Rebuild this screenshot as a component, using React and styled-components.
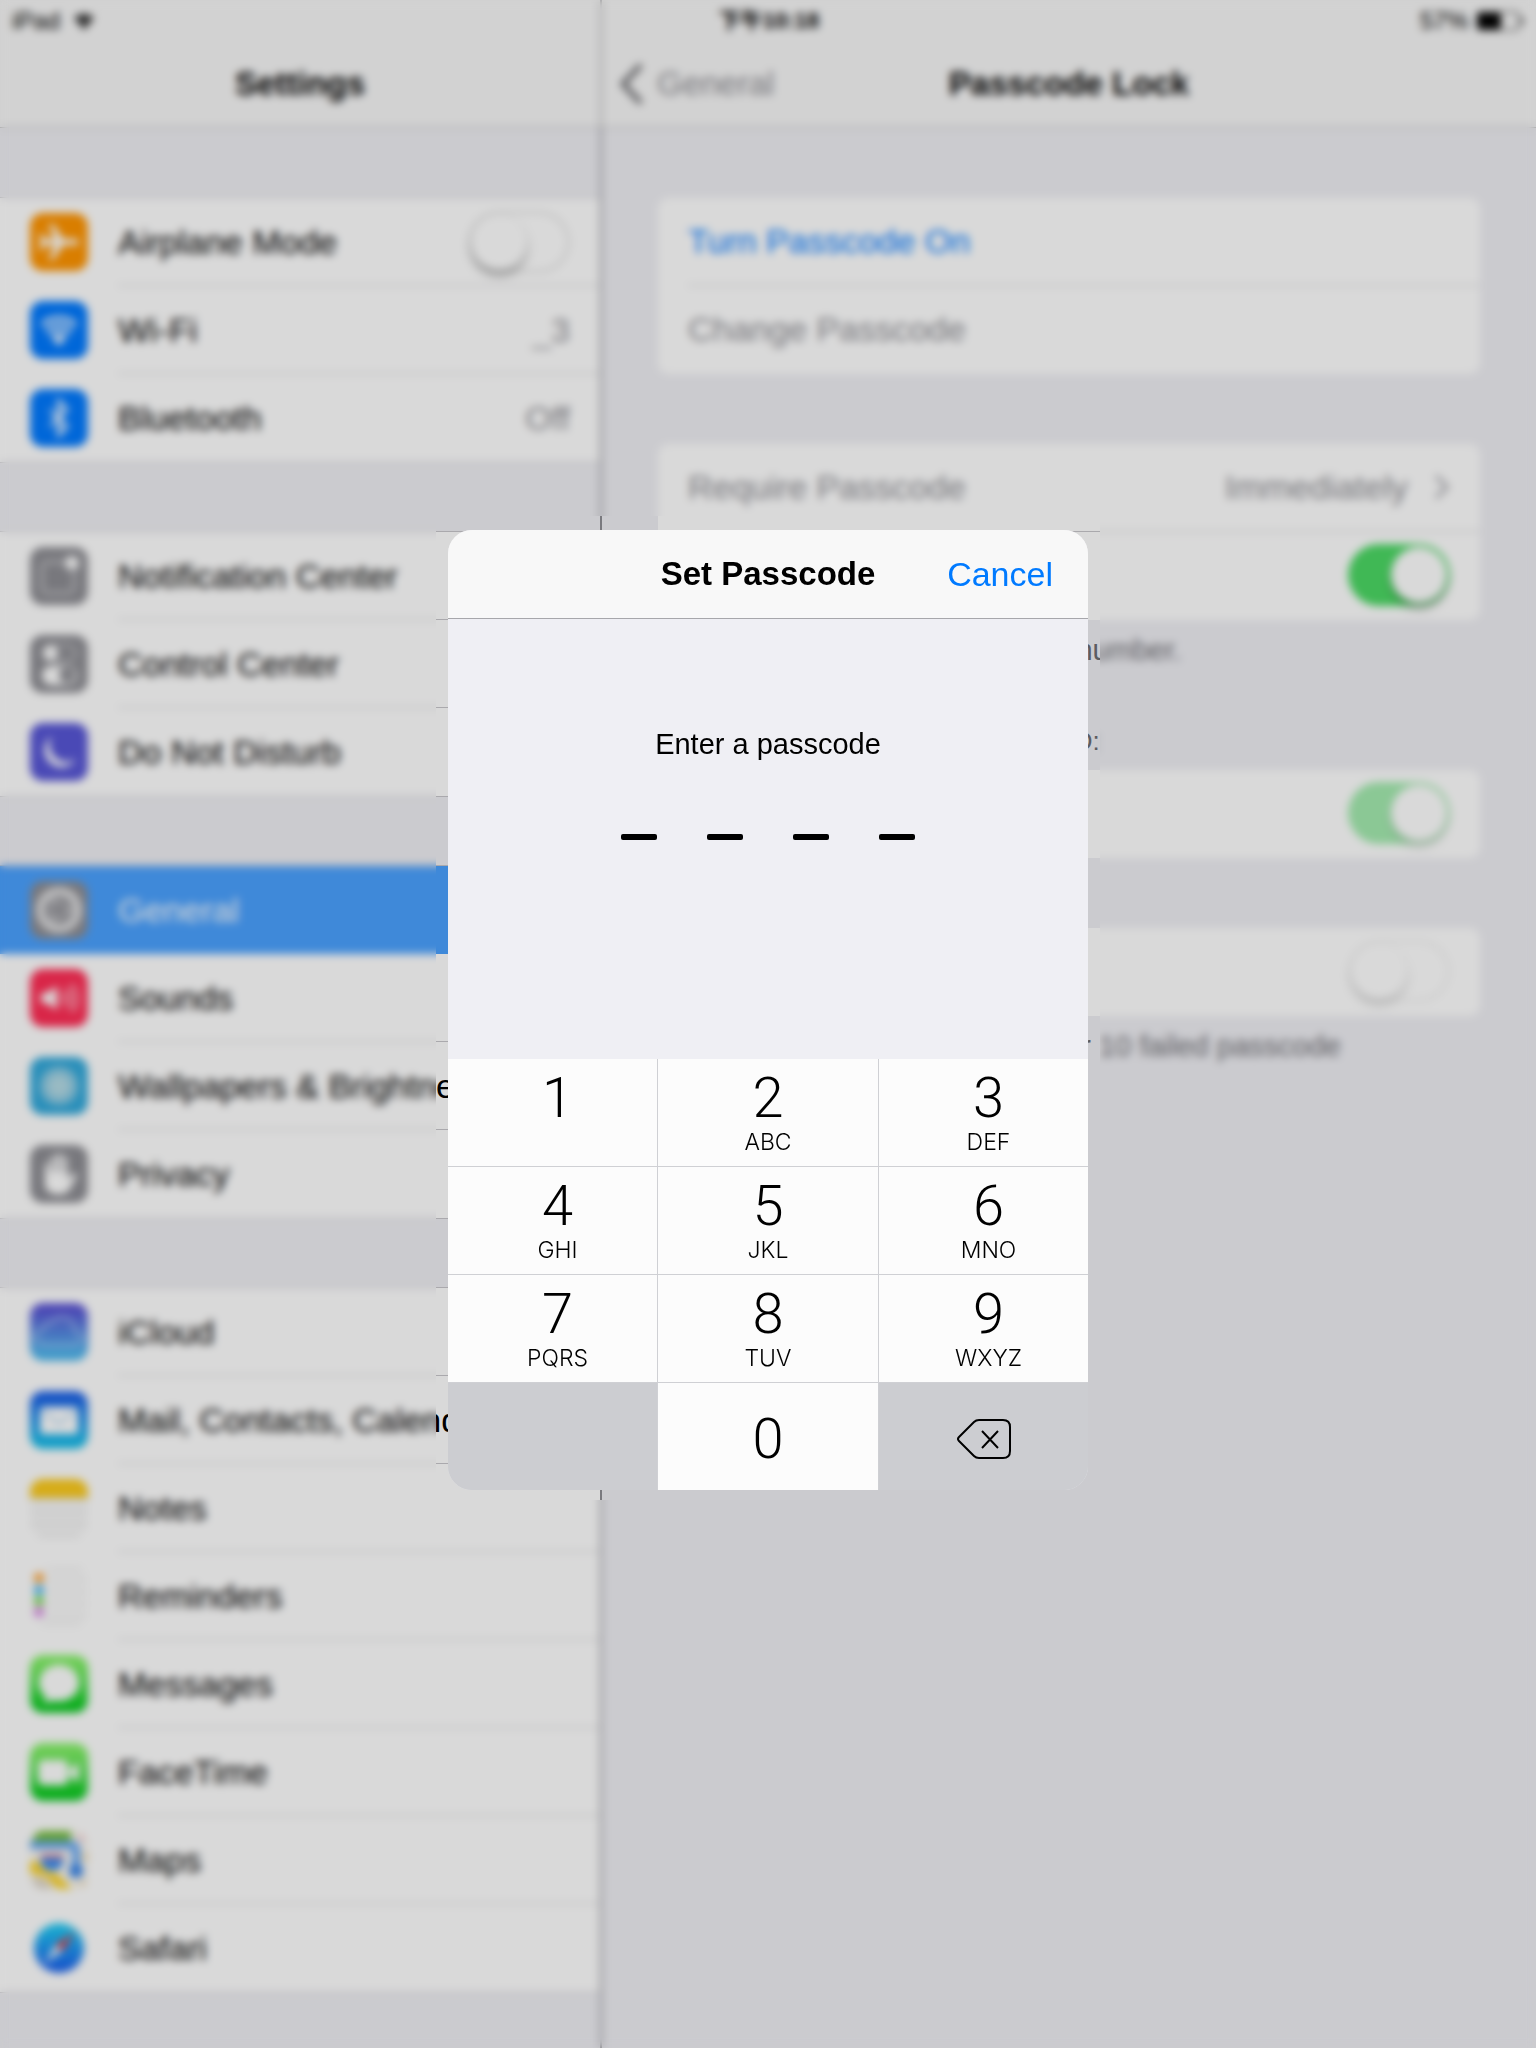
import React from "react";
import styled, { createGlobalStyle, css } from "styled-components";

const GlobalStyle = createGlobalStyle`
  *, *::before, *::after { box-sizing: border-box; }
  body {
    margin: 0;
    background: #efeff4;
    color: #000;
    font-family: "Liberation Sans", Arial, "Noto Sans CJK TC", sans-serif;
    font-size: 34px;
    line-height: 40px;
  }
  button, input { font: inherit; }
`;

/* ---------- page shell ---------- */

const Shell = styled.div`
  display: grid;
  grid-template-columns: 600px 2px minmax(0, 1fr);
  grid-template-rows: 40px 88px auto;
  min-height: 100vh;
`;

const StatusBar = styled.div`
  grid-area: 1 / 1 / 2 / -1;
  display: grid;
  grid-template-columns: 1fr auto 1fr;
  align-items: center;
  padding: 2px 10px 0 12px;
  background: #f7f7f7;
  font-size: 24px;
  line-height: 38px;
`;

const StatusGroup = styled.div`
  display: flex;
  align-items: center;
  justify-content: ${(p) => (p.$end ? "flex-end" : "flex-start")};
  gap: ${(p) => (p.$end ? 8 : 14)}px;
`;

const Clock = styled.time`
  font-size: 22px;
  font-weight: 700;
`;

const Divider = styled.div`
  grid-area: 1 / 2 / -1 / 3;
  z-index: 1;
  background: linear-gradient(#b2b2b6 128px, #8f8f94 128px);
`;

const NavBar = styled.header`
  grid-row: 2;
  grid-column: ${(p) => p.$column};
  display: grid;
  grid-template-columns: 1fr auto 1fr;
  align-items: center;
  padding: 0 18px;
  background: #f7f7f7;
  border-bottom: 1px solid #b2b2b6;
`;

const NavTitle = styled.h1`
  grid-column: 2;
  margin: 0;
  font-size: 33px;
  line-height: 40px;
  font-weight: 700;
`;

const BackLink = styled.a`
  display: flex;
  align-items: center;
  gap: 14px;
  color: #8e8e93;
  font-size: 33px;
  text-decoration: none;
`;

/* ---------- sidebar ---------- */

const Sidebar = styled.nav`
  grid-area: 3 / 1 / 4 / 2;
  display: flex;
  flex-direction: column;
  gap: 70px;
  padding: 70px 0 56px;
  min-width: 0;
`;

const List = styled.ul`
  margin: 0;
  padding: 0;
  list-style: none;
  background: #fff;
  box-shadow: 0 -1px #c8c7cc, 0 1px #c8c7cc;
`;

const rowBase = css`
  display: flex;
  align-items: center;
  height: 88px;
  color: inherit;
  text-decoration: none;
  white-space: nowrap;
`;

const SideItem = styled.li`
  ${rowBase}
  gap: 30px;
  padding-left: 30px;
  background: ${(p) => (p.$selected ? "#4ba2ff" : "transparent")};
  color: ${(p) => (p.$selected ? "#fff" : "#000")};
`;

const SideBody = styled.a`
  ${rowBase}
  flex: 1;
  min-width: 0;
  justify-content: space-between;
  padding-right: 30px;
  border-bottom: ${(p) => (p.$line ? "1px solid #c8c7cc" : "0")};
`;

const Value = styled.span`
  color: #8e8e93;
`;

/* ---------- detail pane ---------- */

const Detail = styled.main`
  grid-area: 3 / 3 / 4 / 4;
  display: flex;
  flex-direction: column;
  padding: 70px 56px 0;
`;

const Section = styled.section`
  margin-bottom: ${(p) => (p.$tight ? 55 : 70)}px;
`;

const Card = styled.div`
  border-radius: 10px;
  background: #fff;
`;

const CardRow = styled.div`
  ${rowBase}
  justify-content: space-between;
  margin-left: 30px;
  padding: 0 30px 3px 0;
  color: ${(p) => p.$color || "#000"};
  & + & { box-shadow: 0 -1px #c8c7cc; }
`;

const Accessory = styled.span`
  display: flex;
  align-items: center;
  gap: 26px;
`;

const Note = styled.p`
  margin: 0;
  padding: 12px 0 0 30px;
  color: #6d6d72;
  font-size: 29px;
  line-height: 36px;
`;

const GroupLabel = styled.h2`
  margin: 0;
  padding: 0 0 11px 30px;
  color: #6d6d72;
  font-size: 26px;
  line-height: 36px;
  font-weight: 400;
`;

const Switch = styled.input.attrs({ type: "checkbox", role: "switch" })`
  appearance: none;
  display: flex;
  flex: none;
  justify-content: flex-start;
  width: 102px;
  height: 62px;
  margin: 0;
  padding: 3px;
  border-radius: 31px;
  background: #fff;
  box-shadow: inset 0 0 0 3px #e5e5e5;

  &::before {
    content: "";
    width: 56px;
    height: 56px;
    border-radius: 50%;
    background: #fff;
    box-shadow: 0 0 0 1px rgba(0, 0, 0, 0.06), 0 6px 6px rgba(0, 0, 0, 0.28);
  }
  &:checked {
    justify-content: flex-end;
    background: #4cd964;
    box-shadow: none;
  }
  &:disabled { opacity: 0.5; }
`;

/* ---------- passcode dialog ---------- */

const Overlay = styled.div`
  position: fixed;
  inset: 0;
  z-index: 2;
  display: flex;
  align-items: center;
  justify-content: center;
  padding-bottom: 28px;
  background: rgba(0, 0, 0, 0.15);
`;

/* Blurs everything except a margin kept clear around the dialog. */
const Frost = styled.div`
  position: absolute;
  inset: 0;
  backdrop-filter: blur(4px);
  clip-path: polygon(
    evenodd,
    0 0, 100% 0, 100% 100%, 0 100%, 0 0,
    calc(50% - 332px) calc(50% - 508px),
    calc(50% + 332px) calc(50% - 508px),
    calc(50% + 332px) calc(50% + 476px),
    calc(50% - 332px) calc(50% + 476px),
    calc(50% - 332px) calc(50% - 508px)
  );
`;

const Dialog = styled.div`
  position: relative;
  display: flex;
  flex-direction: column;
  width: 640px;
  overflow: hidden;
  border-radius: 24px;
  background: #efeff4;
`;

const DialogBar = styled.div`
  display: grid;
  grid-template-columns: 1fr auto 1fr;
  align-items: center;
  height: 89px;
  padding: 0 35px;
  border-bottom: 1px solid #a7a7ab;
  background: #f8f8f8;
`;

const CancelButton = styled.button`
  justify-self: end;
  padding: 0;
  border: 0;
  background: none;
  color: #007aff;
`;

const Entry = styled.div`
  display: flex;
  flex-direction: column;
  align-items: center;
  gap: 72px;
  height: 440px;
  padding-top: 107px;
`;

const Prompt = styled.p`
  margin: 0;
  font-size: 29px;
  line-height: 36px;
`;

const Digits = styled.div`
  display: flex;
  gap: 50px;
`;

const Dash = styled.span`
  width: 36px;
  height: 6px;
  border-radius: 2px;
  background: #000;
`;

const Keypad = styled.div`
  display: grid;
  grid-template-columns: 209px 1fr 209px;
  grid-auto-rows: 107px;
  gap: 1px;
  background: #cfd0d4;
`;

const Key = styled.button`
  display: flex;
  flex-direction: column;
  align-items: center;
  justify-content: ${(p) => (p.$centered ? "center" : "flex-start")};
  padding: ${(p) => (p.$centered ? 4 : 11)}px 0 0 ${(p) => (p.$outer ? 10 : 0)}px;
  border: 0;
  background: ${(p) => (p.$plain ? "#cccdd1" : "#fcfcfc")};
  color: #000;
  font-weight: 300;
`;

const KeyDigit = styled.span`
  font-family: Roboto, "Liberation Sans", sans-serif;
  font-size: 56px;
  line-height: 56px;
`;

const KeyLetters = styled.span`
  font-family: Inter, "Liberation Sans", sans-serif;
  font-size: 23px;
  line-height: 32px;
`;

const KeyBlank = styled.span`
  background: #cccdd1;
`;

/* ---------- drawings ---------- */

const Tile = ({ fill, children }) => (
  <svg width="58" height="58" viewBox="0 0 58 58" aria-hidden="true">
    <rect width="58" height="58" rx="13" fill={fill} />
    {children}
  </svg>
);

const Grad = ({ id, from, to }) => (
  <defs>
    <linearGradient id={id} x1="0" y1="0" x2="0" y2="1">
      <stop offset="0.1" stopColor={from} />
      <stop offset="0.9" stopColor={to} />
    </linearGradient>
  </defs>
);

const icons = {
  airplane: (
    <Tile fill="#ff9500">
      <path d="M49 29c0 2-2 3-5 3H33L23 47h-4l5-15h-8l-4 5H9l2-8-2-8h3l4 5h8l-5-15h4l10 15h11c3 0 5 1 5 3z" fill="#fff" />
    </Tile>
  ),
  wifi: (
    <Tile fill="#007aff">
      <g fill="none" stroke="#fff" strokeWidth="4">
        <path d="M12 24a25 25 0 0 1 34 0" />
        <path d="M17 31a17 17 0 0 1 24 0" />
        <path d="M22 37a10 10 0 0 1 14 0" />
      </g>
      <path d="M29 45l-5-6a8 8 0 0 1 10 0z" fill="#fff" />
    </Tile>
  ),
  bluetooth: (
    <Tile fill="#007aff">
      <path d="M20 21l17 16-8 9V12l8 9-17 16" fill="none" stroke="#fff" strokeWidth="3" />
    </Tile>
  ),
  notifications: (
    <Tile fill="#8e8e93">
      <path d="M35 15H17a5 5 0 0 0-5 5v21a5 5 0 0 0 5 5h22a5 5 0 0 0 5-5V24" fill="none" stroke="#e0e0e2" strokeWidth="2" />
      <circle cx="42" cy="16" r="7" fill="#fff" />
    </Tile>
  ),
  control: (
    <Tile fill="#8e8e93">
      <rect x="13" y="10" width="33" height="16" rx="8" fill="none" stroke="#d0d0d3" strokeWidth="2" />
      <circle cx="21" cy="18" r="7" fill="#fff" />
      <rect x="12" y="31" width="35" height="19" rx="9" fill="#fff" />
      <circle cx="37" cy="40" r="8" fill="#8e8e93" />
    </Tile>
  ),
  moon: (
    <Tile fill="#5856d6">
      <path d="M22 13a17 17 0 0 0 24 23A17 17 0 1 1 22 13z" fill="#fff" />
    </Tile>
  ),
  gear: (
    <Tile fill="#8e8e93">
      <circle cx="29" cy="29" r="18" fill="none" stroke="#e4e4e6" strokeWidth="7" />
      <circle cx="29" cy="29" r="23" fill="none" stroke="#e4e4e6" strokeWidth="2" strokeDasharray="3 3" />
      <circle cx="29" cy="29" r="8" fill="none" stroke="#c4c4c8" strokeWidth="3" />
      <path d="M37 29h9M25 22l-5-8M25 36l-5 8" stroke="#d8d8da" strokeWidth="3" />
    </Tile>
  ),
  sounds: (
    <Tile fill="#ff2d55">
      <path d="M11 24h6l10-7v24l-10-7h-6z" fill="#fff" />
      <path d="M32 23q4 6 0 12M37 19q7 10 0 20M42 15q10 14 0 28" fill="none" stroke="#fff" strokeWidth="2" />
    </Tile>
  ),
  wallpaper: (
    <Tile fill="#32a9db">
      <circle cx="29" cy="29" r="19" fill="#8ccbe3" />
      <circle cx="29" cy="29" r="11" fill="#b4dbe6" />
    </Tile>
  ),
  privacy: (
    <Tile fill="#8e8e93">
      <path d="M17 36V20M23 28V13M29 28V10M35 28V13" stroke="#fff" strokeWidth="4" strokeLinecap="round" />
      <path d="M15 27h23v8l5-6c2-2 5 0 4 2l-8 14c-3 6-21 7-24-4z" fill="#fff" />
    </Tile>
  ),
  icloud: (
    <Tile fill="url(#g-icloud)">
      <Grad id="g-icloud" from="#5b54d4" to="#4fb8ee" />
      <path d="M15 42a8 8 0 0 1-2-16 9 9 0 0 1 9-7 13 13 0 0 1 23 9 7 7 0 0 1-1 14z" fill="none" stroke="#b9d2f5" strokeWidth="2" />
    </Tile>
  ),
  mail: (
    <Tile fill="url(#g-mail)">
      <Grad id="g-mail" from="#1d62e8" to="#18bdea" />
      <rect x="10" y="16" width="38" height="27" rx="3" fill="#fff" />
      <path d="M11 18l18 15 18-15" fill="none" stroke="#9ccbf0" strokeWidth="2" />
    </Tile>
  ),
  notes: (
    <Tile fill="#fafafa">
      <path d="M0 19v-6A13 13 0 0 1 13 0h32a13 13 0 0 1 13 13v6z" fill="#fccb1d" />
      <path d="M0 21h58M1 33h56M1 45h56M9 57h40" stroke="#dedede" strokeWidth="2" />
    </Tile>
  ),
  reminders: (
    <Tile fill="#fdfdfd">
      <path d="M18 2h34M18 13h39M18 25h39M18 37h39M18 49h39M12 57h38" stroke="#e8e8e8" strokeWidth="2" />
      <circle cx="9" cy="11" r="5" fill="#ff9f29" />
      <circle cx="9" cy="23" r="5" fill="#3fb4f4" />
      <circle cx="9" cy="34" r="5" fill="#74d84c" />
      <circle cx="9" cy="45" r="5" fill="#d87fe4" />
    </Tile>
  ),
  messages: (
    <Tile fill="url(#g-msg)">
      <Grad id="g-msg" from="#87f26a" to="#0ccb22" />
      <path d="M29 10c11 0 20 8 20 18s-9 18-20 18c-3 0-5 0-7-1-2 2-5 3-9 3 2-2 3-4 3-6-4-3-7-8-7-14 0-10 9-18 20-18z" fill="#fff" />
    </Tile>
  ),
  facetime: (
    <Tile fill="url(#g-ft)">
      <Grad id="g-ft" from="#87f26a" to="#0ccb22" />
      <rect x="8" y="17" width="30" height="25" rx="5" fill="#fff" />
      <path d="M39 27l10-8v21l-10-8z" fill="#fff" />
    </Tile>
  ),
  maps: (
    <Tile fill="#faf6ef">
      <path d="M3 8C5 3 8 0 13 0h28v10H2z" fill="#74bb3a" />
      <path d="M0 14h42q4 0 4 6v20" fill="none" stroke="#62a6f6" strokeWidth="8" />
      <path d="M50 3l5 6h-6z" fill="#f6a6b9" />
      <path d="M0 32q6-6 10 2 8 10 16 8l16 16H28L16 46 0 42z" fill="#fcd325" />
      <path d="M2 46l12 2 10 10H13C7 58 3 54 2 46z" fill="#ded6c8" />
      <path d="M10 27h24l-2 8q-10 10-20 0z" fill="#3b8cf0" />
      <path d="M11 25h22" stroke="#e8606a" strokeWidth="3" />
      <circle cx="46" cy="40" r="7" fill="#2f80ea" />
      <path d="M52 22h6v8h-6zM50 50h6v5h-6z" fill="#ecd9b0" />
    </Tile>
  ),
  safari: (
    <Tile fill="#fff">
      <Grad id="g-saf" from="#1fc8f4" to="#1c66ee" />
      <circle cx="29" cy="29" r="25" fill="url(#g-saf)" />
      <path d="M45 13L32 32l-6-6z" fill="#f03a35" />
      <path d="M14 45l12-19 6 6z" fill="#f4f8fc" />
    </Tile>
  ),
};

const WifiGlyph = () => (
  <svg width="20" height="17" viewBox="0 0 20 17" aria-hidden="true">
    <path d="M0 5a14 14 0 0 1 20 0L10 17z" fill="#3a3a3a" />
  </svg>
);

const BatteryGlyph = () => (
  <svg width="50" height="22" viewBox="0 0 50 22" role="img" aria-label="Battery">
    <rect x="1" y="2" width="42" height="18" rx="3" fill="none" stroke="#000" strokeWidth="1" />
    <rect x="2" y="3" width="23" height="16" rx="2" />
    <path d="M45 7q5 4 0 8z" />
  </svg>
);

const BackChevron = () => (
  <svg width="23" height="42" viewBox="0 0 23 42" aria-hidden="true">
    <path d="M21 2L3 21l18 19" fill="none" stroke="#6a6a6e" strokeWidth="5" />
  </svg>
);

const Disclosure = () => (
  <svg width="16" height="26" viewBox="0 0 16 26" aria-hidden="true">
    <path d="M2 2l11 11L2 24" fill="none" stroke="#b4b4b9" strokeWidth="4" />
  </svg>
);

const BackspaceGlyph = () => (
  <svg width="54" height="40" viewBox="0 0 54 40" fill="none" stroke="#000" strokeWidth="2" aria-hidden="true">
    <path d="M22 1h24q7 0 7 7v24q0 7-7 7H22q-3 0-5-2L2 22q-2-2 0-4L17 3q2-2 5-2z" strokeLinejoin="round" />
    <path d="M25 12l16 17M41 12L25 29" />
  </svg>
);

/* ---------- data ---------- */

const sideGroups = [
  [
    { icon: "airplane", label: "Airplane Mode", toggle: true },
    { icon: "wifi", label: "Wi-Fi", value: "_3" },
    { icon: "bluetooth", label: "Bluetooth", value: "Off" },
  ],
  [
    { icon: "notifications", label: "Notification Center" },
    { icon: "control", label: "Control Center" },
    { icon: "moon", label: "Do Not Disturb" },
  ],
  [
    { icon: "gear", label: "General", selected: true },
    { icon: "sounds", label: "Sounds" },
    { icon: "wallpaper", label: "Wallpapers & Brightness" },
    { icon: "privacy", label: "Privacy" },
  ],
  [
    { icon: "icloud", label: "iCloud" },
    { icon: "mail", label: "Mail, Contacts, Calendars" },
    { icon: "notes", label: "Notes" },
    { icon: "reminders", label: "Reminders" },
    { icon: "messages", label: "Messages" },
    { icon: "facetime", label: "FaceTime" },
    { icon: "maps", label: "Maps" },
    { icon: "safari", label: "Safari" },
  ],
];

const keys = [
  ["1", ""], ["2", "ABC"], ["3", "DEF"],
  ["4", "GHI"], ["5", "JKL"], ["6", "MNO"],
  ["7", "PQRS"], ["8", "TUV"], ["9", "WXYZ"],
];

/* ---------- parts ---------- */

function SideRow({ item, last }) {
  const line = !last && !item.selected;
  return (
    <SideItem $selected={item.selected}>
      {icons[item.icon]}
      {item.toggle ? (
        <SideBody as="label" $line={line}>
          {item.label}
          <Switch />
        </SideBody>
      ) : (
        <SideBody href="#" $line={line}>
          {item.label}
          {item.value && <Value>{item.value}</Value>}
        </SideBody>
      )}
    </SideItem>
  );
}

function PasscodeDialog() {
  return (
    <Overlay>
      <Frost />
      <Dialog role="dialog" aria-labelledby="passcode-title">
        <DialogBar>
          <NavTitle as="h2" id="passcode-title">Set Passcode</NavTitle>
          <CancelButton type="button">Cancel</CancelButton>
        </DialogBar>
        <Entry>
          <Prompt>Enter a passcode</Prompt>
          <Digits>
            {[0, 1, 2, 3].map((n) => <Dash key={n} />)}
          </Digits>
        </Entry>
        <Keypad>
          {keys.map(([digit, letters], i) => (
            <Key key={digit} type="button" $outer={i % 3 !== 1}>
              <KeyDigit>{digit}</KeyDigit>
              {letters && <KeyLetters>{letters}</KeyLetters>}
            </Key>
          ))}
          <KeyBlank />
          <Key type="button" $centered>
            <KeyDigit>0</KeyDigit>
          </Key>
          <Key type="button" $centered $plain aria-label="Delete">
            <BackspaceGlyph />
          </Key>
        </Keypad>
      </Dialog>
    </Overlay>
  );
}

export default function App() {
  return (
    <>
      <GlobalStyle />
      <Shell>
        <StatusBar>
          <StatusGroup>iPad <WifiGlyph /></StatusGroup>
          <Clock>下午10:18</Clock>
          <StatusGroup $end>57% <BatteryGlyph /></StatusGroup>
        </StatusBar>
        <Divider />
        <NavBar $column={1}>
          <NavTitle>Settings</NavTitle>
        </NavBar>
        <NavBar $column={3}>
          <BackLink href="#"><BackChevron />General</BackLink>
          <NavTitle>Passcode Lock</NavTitle>
        </NavBar>
        <Sidebar>
          {sideGroups.map((group, g) => (
            <List key={g}>
              {group.map((item, i) => (
                <SideRow key={item.label} item={item} last={i === group.length - 1} />
              ))}
            </List>
          ))}
        </Sidebar>
        <Detail>
          <Section>
            <Card>
              <CardRow $color="#007aff">Turn Passcode On</CardRow>
              <CardRow $color="#8e8e93">Change Passcode</CardRow>
            </Card>
          </Section>
          <Section $tight>
            <Card>
              <CardRow $color="#8e8e93">
                Require Passcode
                <Accessory>Immediately <Disclosure /></Accessory>
              </CardRow>
              <CardRow as="label">
                Simple Passcode
                <Switch defaultChecked />
              </CardRow>
            </Card>
            <Note>A simple passcode is a 4 digit number.</Note>
          </Section>
          <Section>
            <GroupLabel>ALLOW ACCESS WHEN LOCKED:</GroupLabel>
            <Card>
              <CardRow as="label" $color="#8e8e93">
                Siri
                <Switch defaultChecked disabled />
              </CardRow>
            </Card>
          </Section>
          <Section>
            <Card>
              <CardRow as="label" $color="#8e8e93">
                Erase Data
                <Switch disabled />
              </CardRow>
            </Card>
            <Note>
              Erase all data on this iPad after 10 failed passcode
              <br />
              attempts.
            </Note>
          </Section>
        </Detail>
      </Shell>
      <PasscodeDialog />
    </>
  );
}
